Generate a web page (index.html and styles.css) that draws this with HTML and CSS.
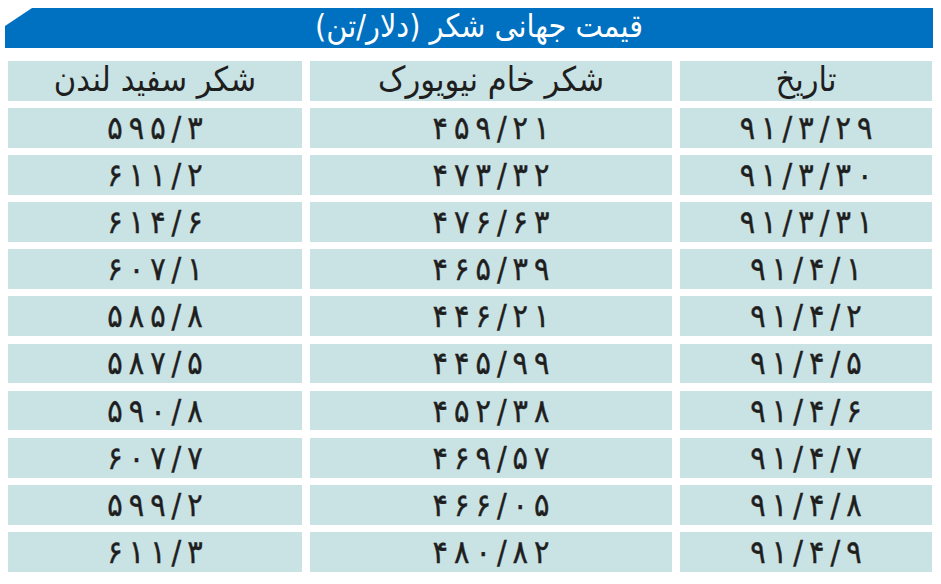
FILE: index.html
```html
<!DOCTYPE html>
<html lang="fa" dir="rtl">
<head>
<meta charset="utf-8">
<link rel="stylesheet" href="styles.css">
<script src="script.js" defer></script>
</head>
<body>
<div class="page">
  <div class="title"><span>قیمت جهانی شکر (دلار/تن)</span></div>
  <div class="table">
    <div class="cell head">تاریخ</div><div class="cell head">شکر خام نیویورک</div><div class="cell head">شکر سفید لندن</div>
    <div class="cell num">۹۱/۳/۲۹</div><div class="cell num">۴۵۹/۲۱</div><div class="cell num">۵۹۵/۳</div>
    <div class="cell num">۹۱/۳/۳۰</div><div class="cell num">۴۷۳/۳۲</div><div class="cell num">۶۱۱/۲</div>
    <div class="cell num">۹۱/۳/۳۱</div><div class="cell num">۴۷۶/۶۳</div><div class="cell num">۶۱۴/۶</div>
    <div class="cell num">۹۱/۴/۱</div><div class="cell num">۴۶۵/۳۹</div><div class="cell num">۶۰۷/۱</div>
    <div class="cell num">۹۱/۴/۲</div><div class="cell num">۴۴۶/۲۱</div><div class="cell num">۵۸۵/۸</div>
    <div class="cell num">۹۱/۴/۵</div><div class="cell num">۴۴۵/۹۹</div><div class="cell num">۵۸۷/۵</div>
    <div class="cell num">۹۱/۴/۶</div><div class="cell num">۴۵۲/۳۸</div><div class="cell num">۵۹۰/۸</div>
    <div class="cell num">۹۱/۴/۷</div><div class="cell num">۴۶۹/۵۷</div><div class="cell num">۶۰۷/۷</div>
    <div class="cell num">۹۱/۴/۸</div><div class="cell num">۴۶۶/۰۵</div><div class="cell num">۵۹۹/۲</div>
    <div class="cell num">۹۱/۴/۹</div><div class="cell num">۴۸۰/۸۲</div><div class="cell num">۶۱۱/۳</div>
  </div>
</div>
</body>
</html>
```
FILE: styles.css
```css
html, body {
  margin: 0;
  padding: 0;
  background: #ffffff;
}
body {
  width: 941px;
  height: 584px;
  overflow: hidden;
  font-family: "DejaVu Sans Condensed", "DejaVu Sans", sans-serif;
  color: #1e1e1e;
}
.page {
  padding: 8px 8px 0 5px;
}
.title {
  height: 40px;
  background: #0070c0;
  clip-path: polygon(100% 0, 100% 100%, 0 100%, 0 45%, 27px 0);
  display: flex;
  align-items: center;
  justify-content: center;
  color: #ffffff;
  font-size: 32px;
  line-height: 40px;
  padding-left: 20px;
}
.title span {
  position: relative;
  top: -2px;
}
.table {
  margin-top: 13px;
  margin-left: 3px;
  margin-right: 1px;
  display: grid;
  grid-template-columns: 252px 362px 294px;
  grid-auto-rows: 39.8px;
  column-gap: 8px;
  row-gap: 7.3px;
}
.cell {
  background: #c9e2e3;
  display: flex;
  align-items: center;
  justify-content: center;
  font-size: 32px;
  line-height: 1;
}
.cell.num {
  direction: ltr;
  gap: 6px;
  -webkit-text-stroke: 0.4px #1e1e1e;
}
.cell.head {
  font-size: 34px;
  padding-bottom: 4px;
}
```
FILE: script.js
```js
document.querySelectorAll('.cell.num').forEach(function (el) {
  var text = el.textContent;
  el.textContent = '';
  Array.from(text).forEach(function (ch) {
    var s = document.createElement('span');
    s.textContent = ch;
    el.appendChild(s);
  });
});
```
